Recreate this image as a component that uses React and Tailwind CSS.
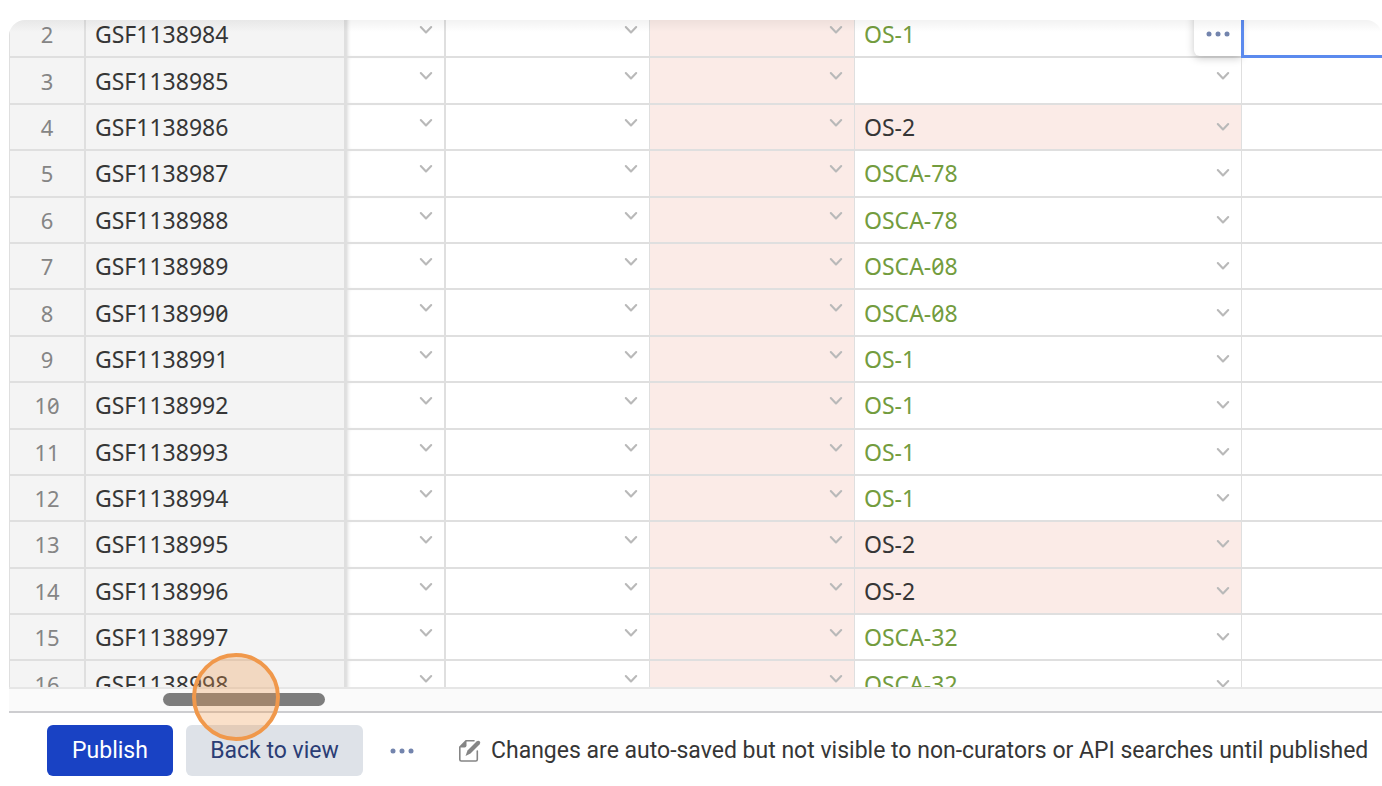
const ROWS = [
  { n: 2, id: "GSF1138984", code: "OS-1", active: true },
  { n: 3, id: "GSF1138985", code: "" },
  { n: 4, id: "GSF1138986", code: "OS-2", flagged: true },
  { n: 5, id: "GSF1138987", code: "OSCA-78" },
  { n: 6, id: "GSF1138988", code: "OSCA-78" },
  { n: 7, id: "GSF1138989", code: "OSCA-08" },
  { n: 8, id: "GSF1138990", code: "OSCA-08" },
  { n: 9, id: "GSF1138991", code: "OS-1" },
  { n: 10, id: "GSF1138992", code: "OS-1" },
  { n: 11, id: "GSF1138993", code: "OS-1" },
  { n: 12, id: "GSF1138994", code: "OS-1" },
  { n: 13, id: "GSF1138995", code: "OS-2", flagged: true },
  { n: 14, id: "GSF1138996", code: "OS-2", flagged: true },
  { n: 15, id: "GSF1138997", code: "OSCA-32" },
  { n: 16, id: "GSF1138998", code: "OSCA-32" },
];

function Chevron({ label }) {
  return (
    <button type="button" aria-label={label} className="block text-[#b9b9b9]">
      <svg width="14" height="10" viewBox="0 0 14 10" fill="none" stroke="currentColor" strokeWidth="2.1" strokeLinecap="round" strokeLinejoin="round">
        <path d="M1.800 2 7 7.400 12.200 2" />
      </svg>
    </button>
  );
}

function Dots() {
  return (
    <svg width="24" height="6" viewBox="0 0 24 6" fill="currentColor">
      <circle cx="3" cy="3" r="2.5" />
      <circle cx="12" cy="3" r="2.5" />
      <circle cx="21" cy="3" r="2.5" />
    </svg>
  );
}

function EditIcon() {
  return (
    <svg width="23" height="24" viewBox="0 0 23 24" className="shrink-0 text-[#858585]" fill="none" aria-hidden="true">
      <path d="M16 1.800H8L1.800 8v12.500q0 1.500 1.500 1.500h14.500q1.500 0 1.500-1.500V12" stroke="currentColor" strokeWidth="1.600" strokeLinecap="round" />
      <path d="M8.500 1.500V6.500q0 2-2 2H1.500Z" fill="currentColor" />
      <path d="M7.500 17 9.500 11.500 18.500 2.600Q20.200 1 21.700 2.300 23 3.800 21.500 5.500L12.500 14.500Z" fill="currentColor" />
    </svg>
  );
}

function Row({ row }) {
  const empty = "border-b-2 border-[#dfdfdf] pt-[13px] pr-[11px] align-top";
  return (
    <tr>
      <th scope="row" className="border-r-2 border-b-2 border-l border-[#dfdfdf] bg-[#f4f4f4] text-center text-[22px] font-normal text-[#858585]">
        {row.n}
      </th>
      <td className="border-r-2 border-b-2 border-[#dfdfdf] bg-[#f4f4f4] pl-[9px]">{row.id}</td>
      <td className={`${empty} border-r-2 shadow-[inset_4px_0_4px_-3px_#00000033]`}>
        <div className="flex justify-end"><Chevron label={`Row ${row.n}, first list`} /></div>
      </td>
      <td className={`${empty} border-r`}>
        <div className="flex justify-end"><Chevron label={`Row ${row.n}, second list`} /></div>
      </td>
      <td className={`${empty} border-r bg-[#fbebe7]`}>
        <div className="flex justify-end"><Chevron label={`Row ${row.n}, third list`} /></div>
      </td>
      <td className={`relative border-r border-b-2 border-[#dfdfdf] pr-[11px] pl-[9px] ${row.flagged ? "bg-[#fbebe7]" : "text-[#739c3e]"} ${row.code ? "" : "pt-[13px] align-top"}`}>
        <div className="flex items-center justify-between">
          {row.code && <span>{row.code}</span>}
          {!row.active && <div className="ml-auto"><Chevron label={`Row ${row.n}, code list`} /></div>}
        </div>
        {row.active && (
          <button type="button" aria-label="Cell actions" className="absolute inset-y-0 right-0 flex w-[47px] items-center justify-center rounded-bl-md bg-white text-[#7384ad] shadow-[0_2px_9px_#00000038]">
            <Dots />
          </button>
        )}
      </td>
      <td className={`border-b-2 border-[#dfdfdf] ${row.active ? "relative" : ""}`}>
        {row.active && <div className="absolute -inset-y-[2px] right-0 -left-px border-b-[3px] border-l-[3px] border-[#5b8aee]" />}
      </td>
    </tr>
  );
}

export default function App() {
  return (
    <main className="flex h-screen flex-col pt-5 pl-[9px] text-[23px] leading-7 text-[#363636]">
      <div className="relative min-h-0 flex-1 overflow-hidden rounded-t-2xl font-['Noto_Sans','Open_Sans',sans-serif] slashed-zero">
        <table className="-mt-2 h-[696px] w-full table-fixed border-separate border-spacing-0">
          <colgroup>
            <col className="w-[77px]" />
            <col className="w-[260px]" />
            <col className="w-[100px]" />
            <col className="w-[204px]" />
            <col className="w-[205px]" />
            <col className="w-[387px]" />
            <col />
          </colgroup>
          <tbody>
            {ROWS.map((row) => <Row key={row.n} row={row} />)}
          </tbody>
        </table>
        <div className="pointer-events-none absolute inset-x-0 top-0 h-3 bg-linear-to-b from-black/5 to-transparent" />
      </div>
      <div className="relative h-[26px] shrink-0 border-t-2 border-b-2 border-t-[#e6e6e6] border-b-[#cdcdd0] bg-[#fafafa] pt-1">
        <div className="ml-[154px] h-[13px] w-[162px] rounded-full bg-[#7d7d7d]" />
        <div className="absolute -top-9 left-[183px] z-10 size-[88px] rounded-full border-4 border-[#f0984b] bg-[#f0984b]/30" />
      </div>
      <footer className="flex h-[73px] shrink-0 items-start pt-3 pl-[38px] font-['Roboto','Noto_Sans',sans-serif]">
        <button type="button" className="h-[51px] w-[126px] shrink-0 rounded-md bg-[#1942c4] text-white">Publish</button>
        <button type="button" className="ml-[13px] h-[51px] w-[177px] shrink-0 rounded-md bg-[#dee2e8] text-[#2b3d75]">Back to view</button>
        <button type="button" aria-label="More actions" className="ml-[27px] flex h-[51px] shrink-0 items-center text-[#7384ad]"><Dots /></button>
        <p className="ml-11 flex h-[51px] items-center gap-[10px] whitespace-nowrap">
          <EditIcon />
          <span>Changes are auto-saved but not visible to non-curators or API searches until published</span>
        </p>
      </footer>
    </main>
  );
}
